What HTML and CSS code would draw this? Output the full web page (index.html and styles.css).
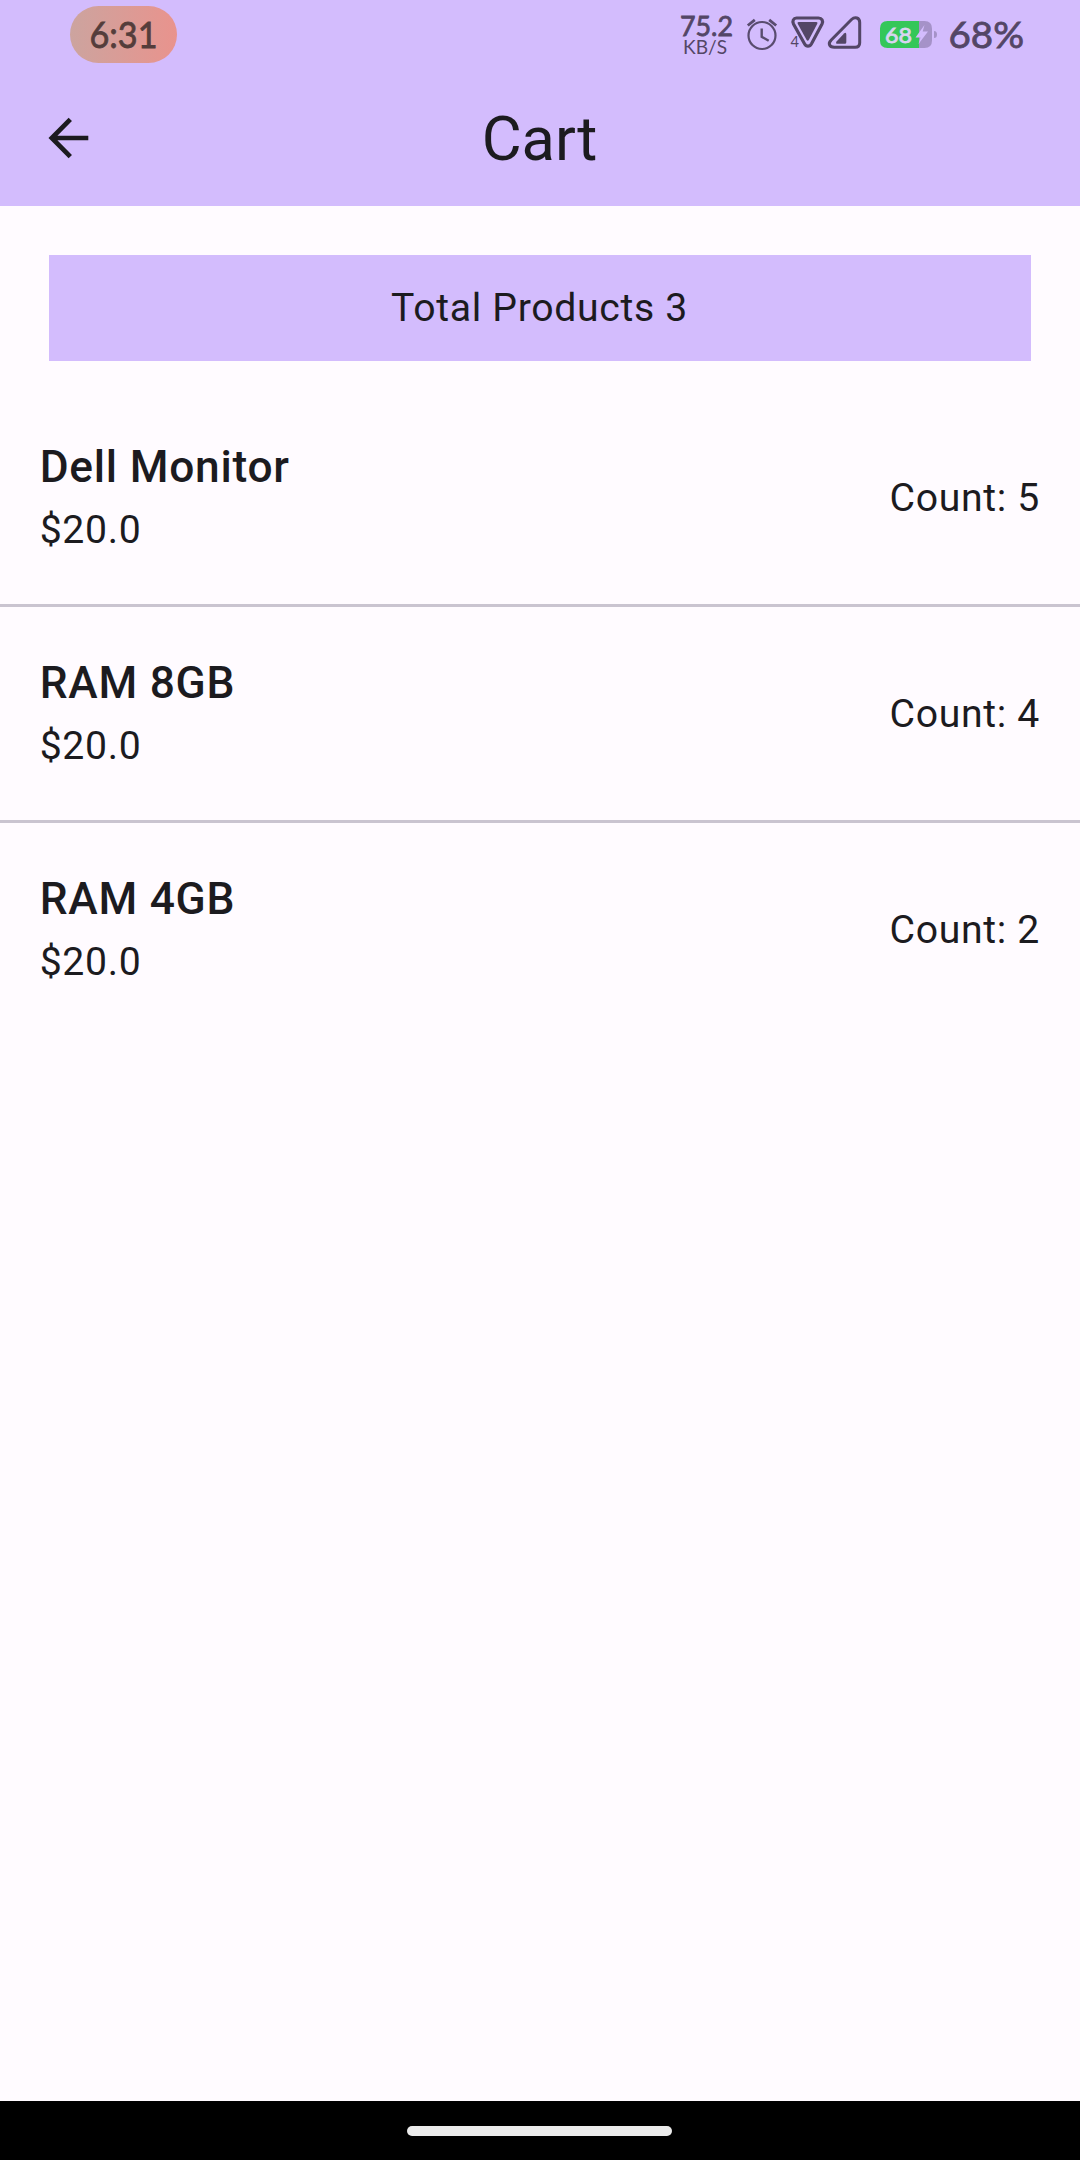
FILE: index.html
```html
<!DOCTYPE html>
<html lang="en">
<head>
<meta charset="utf-8">
<title>Cart</title>
<link rel="stylesheet" href="styles.css">
</head>
<body>
<div class="screen">
  <header class="header">
    <div class="status-bar">
      <div class="clock"><svg width="69" height="57" viewBox="89 6 69 57"><text x="89.5" y="48" font-size="37.500" textLength="68" lengthAdjust="spacingAndGlyphs">6:31</text></svg></div>
      <div class="indicators">
        <svg class="speed" width="56" height="68" viewBox="678 0 56 68">
          <text x="680" y="35.8" font-size="27" textLength="53" lengthAdjust="spacingAndGlyphs">75.2</text>
          <text class="unit" x="683" y="53.6" font-size="18.500" textLength="44" lengthAdjust="spacingAndGlyphs">KB/S</text>
        </svg>
        <svg class="alarm" width="32" height="68" viewBox="746 0 32 68" fill="none" stroke="#594c6e">
          <circle cx="762" cy="35.5" r="13.5" stroke-width="2.2"/>
          <path d="M761.7 28.5v8.2l7 4" stroke-width="2.4"/>
          <path d="M747.8 25.5l7-5.7M769.2 19.8l7 5.7" stroke-width="2.8"/>
        </svg>
        <svg class="wifi" width="36" height="68" viewBox="789 0 36 68">
          <path d="M796.500 18h22c3.4 0 5 3 3.5 6l-10.500 19.800c-1.800 3.200-5.200 3.200-7 0l-11-19.800c-1.500-3 0-6 3-6z" fill="none" stroke="#534666" stroke-width="3.200"/>
          <path d="M798.700 22h17.600q1.800 0 1 1.700l-8.400 16q-1.200 2-2.400 0l-8.800-16q-.8-1.700 1-1.700z" fill="#534666"/>
          <text class="unit" x="790.5" y="46.500" font-size="15" textLength="8.500" lengthAdjust="spacingAndGlyphs">4</text>
        </svg>
        <svg class="signal" width="34" height="68" viewBox="828 0 34 68">
          <path d="M831 40.300l20.500-20.800c3.600-3.300 8.200-1.700 8.200 3v20.300q0 4.500-4.500 4.500h-21c-5 0-6.300-4-3.200-7z" fill="none" stroke="#534666" stroke-width="3"/>
          <path d="M836.500 41.500l7.500-8q2.300-1.700 2.300 1v7.800q0 1.500-1.500 1.500h-7.300q-2.200 0-1-2.300z" fill="#534666"/>
        </svg>
        <svg class="battery" width="60" height="68" viewBox="879 0 60 68">
          <path d="M919 21h5.500q7.500 0 7.500 7.500v12q0 7.500-7.500 7.500H919z" fill="#a592c8"/>
          <path d="M919 21h-31.500q-7.500 0-7.500 7.500v12q0 7.500 7.500 7.500H919z" fill="#34c759"/>
          <path d="M934 31q3 0 3 3.500t-3 3.500z" fill="#a592c8"/>
          <text class="battery-level" x="885" y="43" font-size="22" textLength="27" lengthAdjust="spacingAndGlyphs">68</text>
          <path d="M924.500 25l-9 12.500h5L918.500 44l9.500-12.500h-5.300z" fill="#d3bcfd"/>
        </svg>
        <svg class="percent" width="76" height="68" viewBox="948 0 76 68"><text x="948.500" y="48" font-size="37.500" textLength="75.500" lengthAdjust="spacingAndGlyphs">68%</text></svg>
      </div>
    </div>
    <div class="app-bar">
      <svg class="back" width="40" height="42" viewBox="48 117 40 42" fill="none" stroke="#1c1b1f" stroke-width="4.700"><path d="M88.300 138H52M70.300 119.300L51.800 138l18.500 18.700"/></svg>
      <h1 class="title">Cart</h1>
    </div>
  </header>
  <main class="content">
    <div class="total">Total Products 3</div>
    <ul class="items">
      <li class="item"><div class="info"><div class="name">Dell Monitor</div><div class="price">$20.0</div></div><div class="count">Count: 5</div></li>
      <li class="item"><div class="info"><div class="name">RAM 8GB</div><div class="price">$20.0</div></div><div class="count">Count: 4</div></li>
      <li class="item"><div class="info"><div class="name">RAM 4GB</div><div class="price">$20.0</div></div><div class="count">Count: 2</div></li>
    </ul>
  </main>
  <footer class="nav-bar"><div class="handle"></div></footer>
</div>
</body>
</html>
```
FILE: styles.css
```css
* { box-sizing: border-box; }
body { margin: 0; font-family: Roboto, sans-serif; color: #1c1b1f; }
svg { display: block; flex: none; overflow: visible; }
.screen { width: 1080px; height: 2160px; display: flex; flex-direction: column; background: #fffbff; }
.header { height: 206px; background: #d3bcfd; }
.status-bar { height: 68px; padding: 0 56px 0 70px; display: flex; justify-content: space-between; font-family: Lato, sans-serif; font-weight: 400; }
.status-bar text { fill: #534666; stroke: #534666; stroke-width: .8px; }
.status-bar .unit { stroke: none; }
.clock { width: 107px; height: 57px; margin-top: 6px; padding-left: 19px; border-radius: 29px; background: linear-gradient(90deg, #cca49f, #e9938d); }
.status-bar .clock text { fill: #543d3b; stroke: #543d3b; }
.status-bar .battery-level { fill: #d8d5f1; stroke: #d8d5f1; }
.indicators { display: flex; }
.alarm { margin-left: 12px; }
.wifi { margin-left: 11px; }
.signal { margin-left: 3px; }
.battery { margin-left: 17px; }
.percent { margin-left: 9px; }
.app-bar { height: 138px; padding: 0 48px; display: grid; grid-template-columns: 40px 1fr 40px; align-items: center; }
.back { margin-top: 1px; }
.title { margin: 4px 1px 0 0; font-size: 61.4px; font-weight: 400; line-height: 72px; text-align: center; }
.content { flex: 1; padding-top: 49px; font-size: 39.2px; letter-spacing: .66px; }
.total { height: 105.6px; margin: 0 49px; padding-right: 1px; display: flex; align-items: center; justify-content: center; background: #d3bcfd; }
.items { list-style: none; margin: 30.4px 0 0; padding: 0; }
.item { height: 216px; padding: 0 40px 0 39.7px; display: flex; align-items: center; justify-content: space-between; border-bottom: 3px solid #cac4d0; }
.item:last-child { border-bottom-color: transparent; }
.info { height: 122px; padding-top: 1.3px; }
.name { font-size: 44.3px; font-weight: 500; line-height: 58px; letter-spacing: .75px; }
.price { margin-top: 5px; line-height: 58px; }
.count { margin-top: 2px; }
.nav-bar { height: 59px; display: flex; justify-content: center; background: #000; }
.handle { width: 265px; height: 10px; margin: 25px 1px 0 0; border-radius: 5px; background: #ebebeb; }
```
